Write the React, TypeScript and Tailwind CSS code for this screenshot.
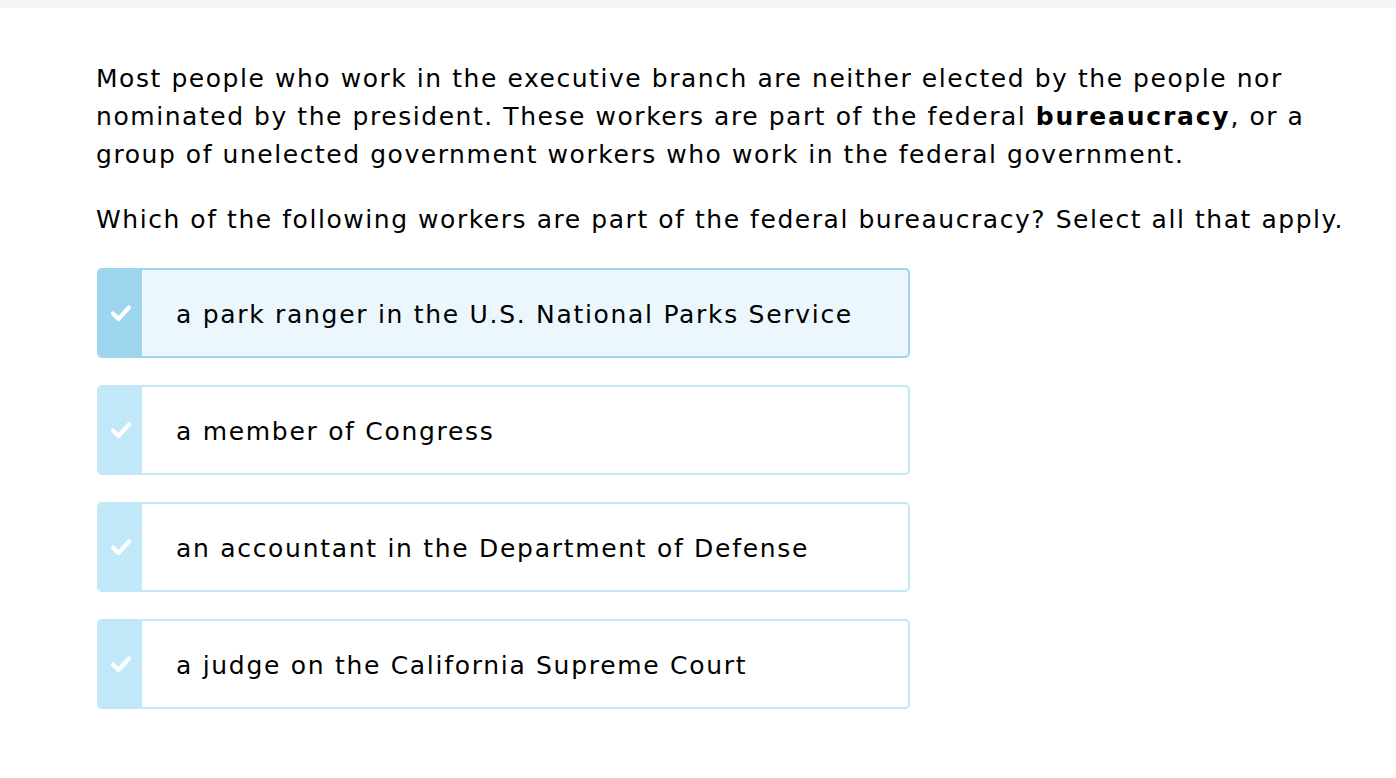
import React from "react";

const Check = () => (
  <svg width="22" height="18" viewBox="0 0 22 18" fill="none">
    <path d="M3 9.5 L8.5 15 L19 3.5" stroke="white" strokeWidth="4.2" strokeLinecap="round" strokeLinejoin="round" />
  </svg>
);

const options = [
  { text: "a park ranger in the U.S. National Parks Service", selected: true },
  { text: "a member of Congress", selected: false },
  { text: "an accountant in the Department of Defense", selected: false },
  { text: "a judge on the California Supreme Court", selected: false },
];

export default function App() {
  return (
    <div className="w-[1396px] h-[778px] bg-white text-black tracking-[1.55px]" style={{ fontFamily: '"DejaVu Sans", Verdana, sans-serif' }}>
      <div className="h-[8px] bg-[#f3f6f9]" />
      <div className="pl-[96px] pt-[52px]">
        <p className="text-[25px] leading-[38px] w-[1240px]">
          Most people who work in the executive branch are neither elected by the people nor nominated by the president. These workers are part of the federal <b className="tracking-[1.8px]">bureaucracy</b>, or a group of unelected government workers who work in the federal government.
        </p>
        <p className="text-[25px] leading-[38px] mt-[27px] whitespace-nowrap">
          Which of the following workers are part of the federal bureaucracy? Select all that apply.
        </p>
        <div className="mt-[29px] flex flex-col gap-[27px] pl-[1px]">
          {options.map((o, i) => (
            <div
              key={i}
              className={
                "w-[813px] h-[90px] rounded-[5px] border-2 flex overflow-hidden " +
                (o.selected ? "border-[#9fd5ee] bg-[#ebf7fc]" : "border-[#c4e7f6] bg-white")
              }
            >
              <div className={"w-[43px] flex items-center justify-center " + (o.selected ? "bg-[#9dd4ee]" : "bg-[#c1e8f9]")}>
                <Check />
              </div>
              <div className="flex items-center pl-[34px] pt-[3px] text-[25px] tracking-[1.7px]">{o.text}</div>
            </div>
          ))}
        </div>
      </div>
    </div>
  );
}
